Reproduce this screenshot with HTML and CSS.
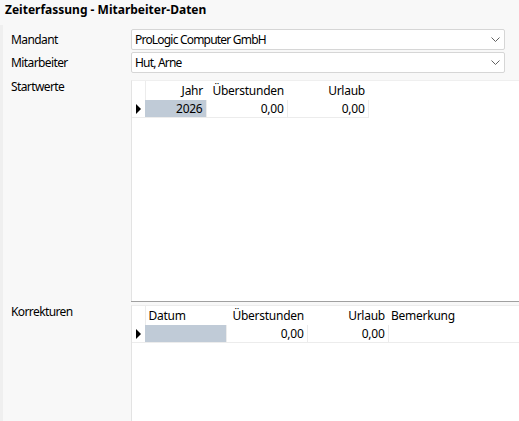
FILE: index.html
```html
<!DOCTYPE html>
<html>
  <head>
    <title>Zeiterfassung - Mitarbeiter-Daten</title>
    <link rel="stylesheet" href="styles.css">
  </head>
  <body>
    <div class="title">Zeiterfassung - Mitarbeiter-Daten</div>

    <div class="form">
      <div class="row">
        <div class="label">Mandant</div>
        <div class="combo">
          <span>ProLogic Computer GmbH</span>
          <svg class="chevron" width="9" height="5" viewBox="0 0 9 5">
            <path d="M0.5 0.5 L4.5 4.5 L8.5 0.5" fill="none" stroke="#606060" stroke-width="1" />
          </svg>
        </div>
      </div>

      <div class="row">
        <div class="label">Mitarbeiter</div>
        <div class="combo">
          <span>Hut, Arne</span>
          <svg class="chevron" width="9" height="5" viewBox="0 0 9 5">
            <path d="M0.5 0.5 L4.5 4.5 L8.5 0.5" fill="none" stroke="#606060" stroke-width="1" />
          </svg>
        </div>
      </div>

      <div class="row grid-row start">
        <div class="label">Startwerte</div>
        <div class="grid">
          <table class="t-start">
            <colgroup>
              <col class="c-ind">
              <col class="c-60">
              <col class="c-81">
              <col class="c-81">
              <col class="c-fill">
            </colgroup>
            <tr class="head">
              <th class="ind"></th>
              <th class="num">Jahr</th>
              <th class="num">Überstunden</th>
              <th class="num">Urlaub</th>
              <th></th>
            </tr>
            <tr class="data">
              <td class="ind"><span class="arrow"></span></td>
              <td class="num sel">2026</td>
              <td class="num">0,00</td>
              <td class="num">0,00</td>
              <td class="empty"></td>
            </tr>
          </table>
        </div>
      </div>

      <div class="row grid-row corr">
        <div class="label">Korrekturen</div>
        <div class="grid">
          <table class="t-corr">
            <colgroup>
              <col class="c-ind">
              <col class="c-80">
              <col class="c-81">
              <col class="c-81">
              <col class="c-fill">
            </colgroup>
            <tr class="head">
              <th class="ind"></th>
              <th class="left">Datum</th>
              <th class="num">Überstunden</th>
              <th class="num">Urlaub</th>
              <th class="left">Bemerkung</th>
            </tr>
            <tr class="data">
              <td class="ind"><span class="arrow"></span></td>
              <td class="sel"></td>
              <td class="num">0,00</td>
              <td class="num">0,00</td>
              <td></td>
            </tr>
          </table>
        </div>
      </div>
    </div>
  </body>
</html>
```

FILE: styles.css
```css
html,
body {
  margin: 0;
  height: 100%;
}

body {
  background-color: #f8f8f8;
  color: #000;
  font-family: "Noto Sans", "Open Sans", sans-serif;
  font-size: 12px;
  letter-spacing: -0.6px;
  display: flex;
  flex-direction: column;
  overflow: hidden;
}

.title {
  height: 25px;
  line-height: 20px;
  padding-left: 5px;
  letter-spacing: 0;
  font-weight: bold;
  box-sizing: border-box;
}

.form {
  flex: 1;
  display: flex;
  flex-direction: column;
  border-left: 3px solid #efefef;
  padding-top: 4px;
  min-height: 0;
}

.row {
  display: flex;
  align-items: center;
  margin-bottom: 2px;
}

.label {
  width: 128px;
  padding-left: 8px;
  box-sizing: border-box;
  flex-shrink: 0;
}

.combo {
  width: 374px;
  height: 21px;
  box-sizing: border-box;
  background-color: #fff;
  border: 1px solid #d6d6d6;
  border-radius: 2px;
  display: flex;
  align-items: center;
  justify-content: space-between;
  padding: 0 4px 0 3px;
  letter-spacing: -0.8px;
}

.chevron {
  display: block;
}

.grid-row {
  align-items: stretch;
  margin-bottom: 0;
}

.start {
  margin-top: 5px;
  height: 221px;
}

.start .label {
  line-height: 14px;
}

.corr {
  flex: 1;
  border-top: 1px solid #a0a0a0;
  margin-left: 128px;
}

.corr .label {
  margin-left: -128px;
  background-color: #f8f8f8;
  margin-top: -1px;
  padding-top: 2px;
}

.grid {
  flex: 1;
  background-color: #fff;
  border-left: 1px solid #e3e3e3;
  border-top: 1px solid #efefef;
  overflow: hidden;
  letter-spacing: -0.25px;
}

.corr .grid {
  margin-top: 3px;
  border-top: 1px solid #ececec;
}

table {
  border-collapse: collapse;
  table-layout: fixed;
}

.t-start {
  width: 387px;
}

.t-corr {
  width: 387px;
}

.c-ind {
  width: 13px;
}

.c-60 {
  width: 61px;
}

.c-80 {
  width: 81px;
}

.c-81 {
  width: 81px;
}

.c-fill {
  width: 151px;
}

th {
  font-weight: normal;
  height: 19px;
  padding: 0 3px;
  white-space: nowrap;
}

td {
  height: 17px;
  padding: 0 3px;
  border-right: 1px solid #ececec;
  border-bottom: 1px solid #ececec;
  white-space: nowrap;
}

.num {
  text-align: right;
}

.left {
  text-align: left;
}

.ind {
  padding: 0;
  border-right: 0;
}

th.ind {
  border-right: 1px solid #ececec;
}

td.empty {
  border: 0;
}

.sel {
  background-color: #c0cbd7;
}

.arrow {
  display: block;
  margin-left: 4px;
  width: 0;
  height: 0;
  border-top: 5px solid transparent;
  border-bottom: 5px solid transparent;
  border-left: 5px solid #000;
}
```
